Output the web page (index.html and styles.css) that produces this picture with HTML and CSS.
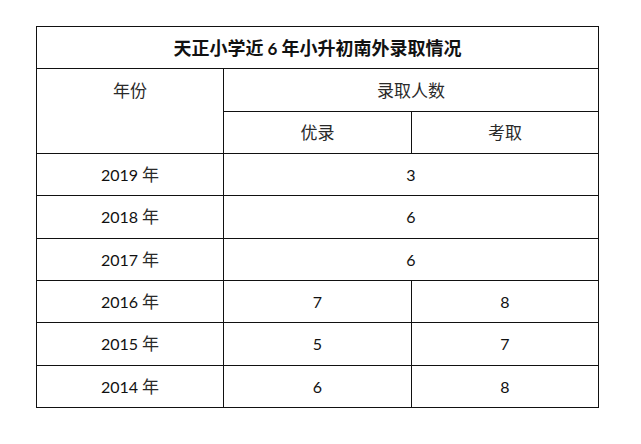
FILE: index.html
```html
<!DOCTYPE html>
<html lang="zh-CN">
<head>
<meta charset="utf-8">
<link rel="stylesheet" href="styles.css">
</head>
<body>
<table class="admit">
  <colgroup>
    <col class="c-year">
    <col class="c-a">
    <col class="c-b">
  </colgroup>
  <tr class="title-row">
    <th colspan="3" class="title">天正小学近<span class="num-b"> 6 </span>年小升初南外录取情况</th>
  </tr>
  <tr>
    <td rowspan="2" class="top">年份</td>
    <td colspan="2">录取人数</td>
  </tr>
  <tr>
    <td>优录</td>
    <td>考取</td>
  </tr>
  <tr><td><span class="num">2019</span> 年</td><td colspan="2"><span class="num">3</span></td></tr>
  <tr><td><span class="num">2018</span> 年</td><td colspan="2"><span class="num">6</span></td></tr>
  <tr><td><span class="num">2017</span> 年</td><td colspan="2"><span class="num">6</span></td></tr>
  <tr><td><span class="num">2016</span> 年</td><td><span class="num">7</span></td><td><span class="num">8</span></td></tr>
  <tr><td><span class="num">2015</span> 年</td><td><span class="num">5</span></td><td><span class="num">7</span></td></tr>
  <tr><td><span class="num">2014</span> 年</td><td><span class="num">6</span></td><td><span class="num">8</span></td></tr>
</table>
</body>
</html>
```
FILE: styles.css
```css
html, body {
  margin: 0;
  padding: 0;
  background: #ffffff;
}

body {
  padding: 26px 0 0 36px;
  font-family: "Noto Sans CJK SC", sans-serif;
  color: #2a2a2a;
}

.admit {
  border-collapse: collapse;
  table-layout: fixed;
  width: 563px;
  height: 382px;
}

.c-year { width: 187px; }
.c-a { width: 188px; }
.c-b { width: 187px; }

.admit th,
.admit td {
  border: 1px solid #111111;
  text-align: center;
  vertical-align: middle;
  padding: 0;
  height: 41px;
  font-size: 17px;
  font-weight: 400;
  line-height: 20px;
}

.admit .title {
  font-size: 18px;
  font-weight: 700;
  color: #111111;
}

.admit .top {
  vertical-align: top;
  padding-top: 11px;
}

.num {
  font-family: "Lato", "Liberation Sans", sans-serif;
  font-size: 16px;
  color: #111111;
}

.num-b {
  font-family: "Lato", "Liberation Sans", sans-serif;
  font-weight: 700;
  font-size: 17px;
}
```
